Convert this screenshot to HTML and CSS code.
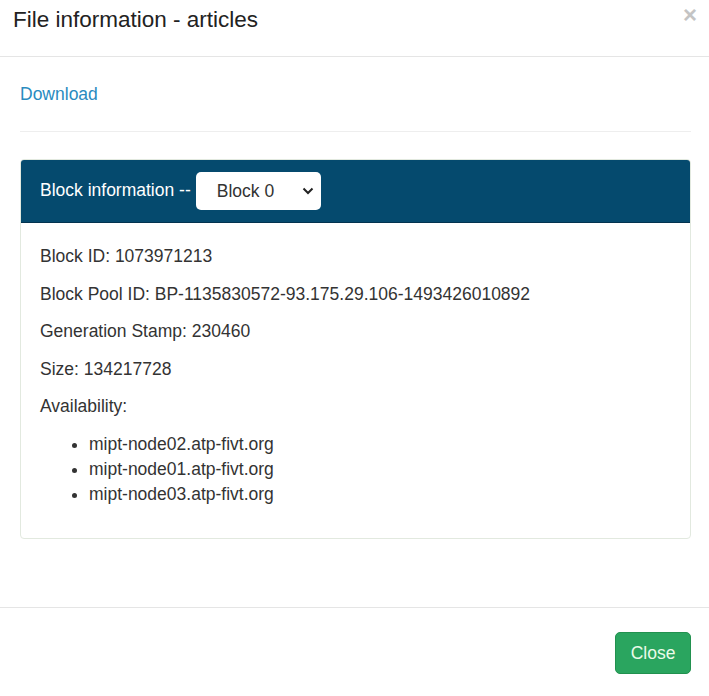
FILE: index.html
```html
<!DOCTYPE html>
<html>
<head>
<meta charset="utf-8">
<link rel="stylesheet" href="styles.css">
</head>
<body>
<div class="modal">
  <div class="modal-header">
    <h4 class="modal-title">File information - articles</h4>
    <span class="close">&times;</span>
  </div>
  <div class="modal-body">
    <a class="download" href="#">Download</a>
    <hr class="divider">
    <div class="panel">
      <div class="panel-heading">
        <span class="heading-text">Block information --</span>
        <div class="select">
          <span>Block 0</span>
          <svg class="chev" width="12" height="8" viewBox="0 0 12 8"><path d="M1.5 1.5 L6 6 L10.5 1.5" fill="none" stroke="#222" stroke-width="2"/></svg>
        </div>
      </div>
      <div class="panel-body">
        <p>Block ID: 1073971213</p>
        <p>Block Pool ID: BP-1135830572-93.175.29.106-1493426010892</p>
        <p>Generation Stamp: 230460</p>
        <p>Size: 134217728</p>
        <p>Availability:</p>
        <ul>
          <li>mipt-node02.atp-fivt.org</li>
          <li>mipt-node01.atp-fivt.org</li>
          <li>mipt-node03.atp-fivt.org</li>
        </ul>
      </div>
    </div>
  </div>
  <div class="modal-footer">
    <button class="btn-close">Close</button>
  </div>
</div>
</body>
</html>
```
FILE: styles.css
```css
html, body {
  margin: 0;
  padding: 0;
  background: #fff;
}
body {
  font-family: "Liberation Sans", Arial, sans-serif;
  font-size: 17.5px;
  line-height: 25px;
  color: #333;
  width: 709px;
}
.modal {
  width: 709px;
}
.modal-header {
  position: relative;
  padding: 7px 13px 23px;
  border-bottom: 1px solid #e5e5e5;
}
.modal-title {
  margin: 0;
  font-size: 22.5px;
  line-height: 26px;
  font-weight: normal;
  color: #222;
}
.close {
  position: absolute;
  right: 12px;
  top: 2px;
  font-size: 24px;
  line-height: 26px;
  color: #c4c4c4;
  font-weight: bold;
}
.modal-body {
  padding: 25px 18px 68px 20px;
}
.download {
  display: block;
  color: #2a8bbf;
  text-decoration: none;
}
.divider {
  border: 0;
  border-top: 1px solid #eeeeee;
  margin: 24px 0 27px;
}
.panel {
  border: 1px solid #e2e9df;
  border-radius: 4px;
  overflow: hidden;
}
.panel-heading {
  background: #054a6e;
  color: #fff;
  height: 63px;
  padding: 0 19px;
  display: flex;
  align-items: center;
  gap: 5px;
  border-bottom: 1px solid #03334f;
  box-sizing: border-box;
}
.heading-text {
  position: relative;
  top: -1px;
}
.select {
  width: 125px;
  height: 38px;
  box-sizing: border-box;
  background: #fff;
  color: #333;
  border-radius: 5px;
  display: flex;
  align-items: center;
  justify-content: space-between;
  padding: 0 7px 0 21px;
}
.panel-body {
  padding: 21px 19px 19px;
}
.panel-body p {
  margin: 0 0 12.5px;
}
.panel-body ul {
  margin: 0 0 12.5px;
  padding-left: 49px;
}
.modal-footer {
  border-top: 1px solid #e5e5e5;
  padding: 24px 18px 22px;
  display: flex;
  justify-content: flex-end;
}
.btn-close {
  font-family: "Liberation Sans", Arial, sans-serif;
  font-size: 17.5px;
  width: 76px;
  height: 42px;
  background: #2aa55f;
  border: 1px solid #22914f;
  border-radius: 5px;
  color: #eafbe9;
  padding: 0;
}
```
